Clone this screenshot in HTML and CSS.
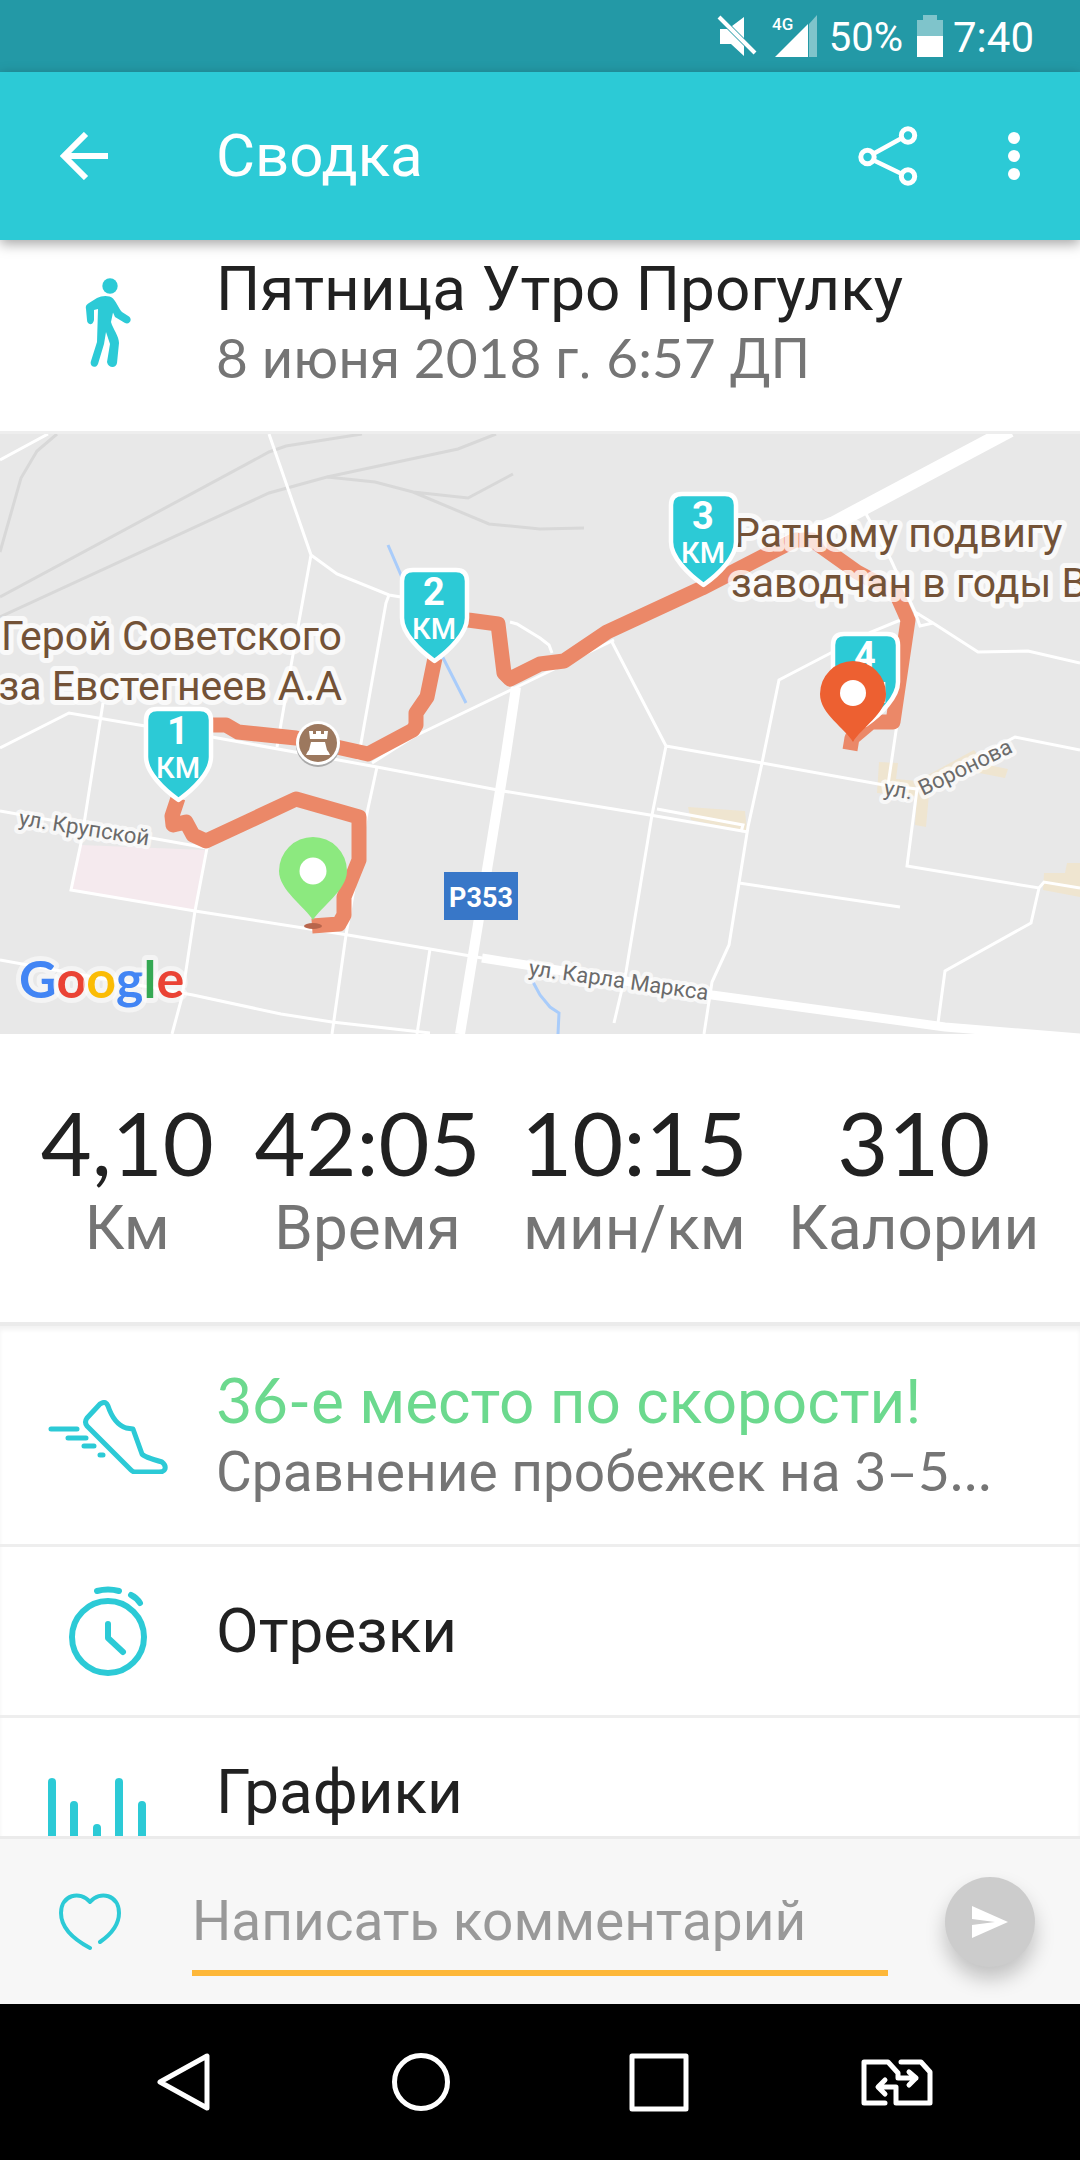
FILE: index.html
```html
<!DOCTYPE html>
<html lang="ru">
<head>
<meta charset="utf-8">
<meta name="viewport" content="width=device-width, initial-scale=1">
<title>Сводка</title>
<link rel="stylesheet" href="styles.css">
</head>
<body>
<div class="app">
  <div class="status">
    <svg class="status-icon" width="42" height="42" viewBox="0 0 42 42" aria-hidden="true">
      <path d="M4 14v15h11l13 12V31L11 14zM16 11l12-9v21z" fill="#fff"/>
      <path d="M3 2l36 36" stroke="#fff" stroke-width="4"/>
    </svg>
    <svg class="status-signal" width="46" height="42" viewBox="0 0 46 42" aria-hidden="true">
      <path d="M37 9L45 0V42H37z" fill="#7fc4cb"/>
      <path d="M3 42L36 9V42z" fill="#fff"/>
      <text x="0" y="15" class="status-net">4G</text>
    </svg>
    <span class="status-percent">50%</span>
    <svg class="status-battery" width="26" height="42" viewBox="0 0 26 42" aria-hidden="true">
      <path d="M6 0h14v5h6v16H0V5h6z" fill="#7fc4cb"/>
      <path d="M0 21h26v21H0z" fill="#fff"/>
    </svg>
    <span class="status-time">7:40</span>
  </div>

  <header class="appbar">
    <button class="icon-button back" type="button" aria-label="Назад">
      <svg width="48" height="48" viewBox="0 0 48 48" fill="none" stroke="#fff" stroke-width="6"><path d="M48 24H5M26 2L4 24l22 22"/></svg>
    </button>
    <h1 class="appbar-title">Сводка</h1>
    <button class="icon-button share" type="button" aria-label="Поделиться">
      <svg width="60" height="60" viewBox="0 0 60 60" fill="none" stroke="#fff" stroke-width="5">
        <circle cx="9.500" cy="31" r="6.700"/><circle cx="50" cy="9.500" r="6.700"/><circle cx="50" cy="50.500" r="6.700"/>
        <path d="M15 28L44 12M15 34L44 48" stroke-width="4.500"/>
      </svg>
    </button>
    <button class="icon-button more" type="button" aria-label="Ещё">
      <svg width="12" height="48" viewBox="0 0 12 48" fill="#fff"><circle cx="6" cy="6" r="6"/><circle cx="6" cy="24" r="6"/><circle cx="6" cy="42" r="6"/></svg>
    </button>
  </header>

  <main class="content">
    <section class="row summary">
      <span class="row-icon">
        <svg width="46" height="90" viewBox="0 0 46 90" aria-hidden="true" fill="#2ccad6">
          <circle cx="25" cy="8" r="7.700"/>
          <path d="M12 20C17 17.500 24 17 28 20.500C32 25 34 31 37 34L44 38.500C48 42 44 47 40 45L30 39L28 34.500L26 44C28 51 34 58 34 65L32 85C31 91 23 90 22 84L25 66L21 54L19 66L13 86C11 91 4 89 6 83L12 64L13 31L9 32L9 42C8 48 2 47 2 42L1 31Q0 27 4 25z"/>
        </svg>
      </span>
      <div class="row-text">
        <h2 class="row-title">Пятница Утро Прогулку</h2>
        <p class="row-sub"><span class="num">8</span> июня <span class="num">2018</span> г. <span class="num">6:57</span> ДП</p>
      </div>
    </section>

    <svg class="map" viewBox="0 0 1080 600" role="img" aria-label="Карта маршрута">
      <defs>
        <g id="km-shield">
          <path d="M13 2H56Q67 2 67 13V50C67 65 50 82 34.500 93C19 82 2 65 2 50V13Q2 2 13 2z" fill="#2ccad6" stroke="#fff" stroke-width="4.500" stroke-linejoin="round"/>
        </g>
      </defs>
      <rect width="1080" height="600" fill="#e8e8e8"/>
      <path d="M81 411L205 416L195 477L71 456z" fill="#f5eaee"/>
      <g fill="#efe5d0">
        <path d="M688 373L745 377L747 397L691 386z"/>
        <path d="M879 328L898 329L896 345L917 347L974 316L980 324L929 360L926 393L915 391L917 362L877 359z"/>
        <path d="M974 338L988 331L1008 335L1005 344z"/>
        <path d="M1044 439H1065L1067 429H1080V463L1043 456z"/>
      </g>
      <g fill="none" stroke="#d8d8d8" stroke-width="3">
        <path d="M0 163L269 18L286 12L362 0"/>
        <path d="M0 183L269 59L327 43L458 15L496 0"/>
        <path d="M327 43L375 48L413 58L468 64L513 40M413 58L489 90L540 95L584 94"/>
        <path d="M57 0L37 17L21 44L0 118"/>
      </g>
      <g fill="none" stroke="#a9ccfa" stroke-width="3">
        <path d="M388 111L401 141L466 269M533 548L540 561L550 573L559 579L558 600"/>
      </g>
      <g fill="none" stroke="#fff" stroke-width="3">
        <path d="M0 26L48 0M269 0L311 121L337 140L389 161L401 163M311 121L292 226L277 313"/>
        <path d="M389 161L386 169L374 236L358 326M377 333L367 379L346 501L332 600"/>
        <path d="M0 314L69 279L145 292M103 269L81 409L71 456L195 477L348 501L430 515L482 524"/>
        <path d="M430 515L417 600M207 414L195 477L182 563L172 600M0 377L207 414"/>
        <path d="M0 526L138 551L193 561L281 580L332 588L430 599"/>
        <path d="M212 303L300 319L377 333L503 357L540 363L650 381L748 398"/>
        <path d="M372 329L413 303L517 253L614 206M510 188L517 190L540 204L549 211L552 219"/>
        <path d="M612 208L666 312L652 381L626 538L614 589M666 312L762 329L884 351L917 355"/>
        <path d="M920 180L898 187L871 198L779 246L762 329L748 393L739 449L729 511L712 548L704 600"/>
        <path d="M739 449L900 473M657 375L743 391L741 398"/>
        <path d="M865 78L891 126L915 178L933 189L978 218L1028 217L1080 229M915 178L920 192L933 189"/>
        <path d="M900 270L888 351M1080 316L1015 303L917 355L907 432L1039 454L1044 448L1080 454M1039 454L1031 489L945 537L938 589"/>
      </g>
      <g fill="none" stroke="#fff">
        <path d="M516 253L506 320L460 600" stroke-width="10"/>
        <path d="M482 524L712 561L945 593L1080 604" stroke-width="9"/>
        <path d="M1010 -4L833 90L780 112" stroke-width="15"/>
      </g>
      <g fill="none" stroke="#eb8868" stroke-width="15" stroke-linejoin="round">
        <path d="M312 492L339 490L344 481V463L359 426V383L296 365L206 407L193 401L186 388L173 391L172 382L178 364"/>
        <path d="M178 291H226L238 298L296 304L368 320L413 296L416 291V279L427 263L435 224"/>
        <path d="M435 180L468 186L498 190L504 239L510 245L540 230L564 227L607 198L702 154L795 106H812L857 138L896 159L908 186L893 288H871L852 304L850 316"/>
      </g>
      <ellipse cx="313" cy="492" rx="9" ry="3" fill="#b8654c"/>
      <g>
        <circle cx="318" cy="311" r="22" fill="#a9a9a9"/>
        <circle cx="318" cy="309" r="22" fill="#fff"/>
        <circle cx="318" cy="309" r="19" fill="#9c785e"/>
        <path d="M309 297h4v3h3v-3h5v3h3v-3h4l-1 8h-17zM311 308h14l2 8q2 2 3 5h-24q1-3 3-5z" fill="#fff"/>
      </g>
      <rect x="444" y="438" width="74" height="48" fill="#3877c8"/>
      <text class="map-route" x="481" y="473" text-anchor="middle">Р353</text>

      <g class="map-place">
        <text x="342" y="216" text-anchor="end">Герой Советского</text>
        <text x="342" y="266" text-anchor="end">за Евстегнеев А.А</text>
        <text x="734" y="113">Ратному подвигу</text>
        <text x="731" y="163">заводчан в годы В</text>
      </g>
      <g class="map-street">
        <text transform="translate(18 391) rotate(9)">ул. Крупской</text>
        <text transform="translate(528 541) rotate(8)">ул. Карла Маркса</text>
        <text transform="translate(883 361) rotate(9)">ул.</text>
        <text transform="translate(923 362) rotate(-26)">Воронова</text>
      </g>

      <g class="map-km" text-anchor="middle">
        <g transform="translate(144 273)"><use href="#km-shield"/><text class="map-km-value" x="34" y="37">1</text><text x="34" y="71">КМ</text></g>
        <g transform="translate(400 134)"><use href="#km-shield"/><text class="map-km-value" x="34" y="37">2</text><text x="34" y="71">КМ</text></g>
        <g transform="translate(669 58)"><use href="#km-shield"/><text class="map-km-value" x="34" y="37">3</text><text x="34" y="71">КМ</text></g>
        <g transform="translate(831 198)"><use href="#km-shield"/><text class="map-km-value" x="34" y="37">4</text><text x="34" y="71">КМ</text></g>
      </g>
      <path d="M313 486C305 473 279 456 279 437A34 34 0 0 1 347 437C347 456 321 473 313 486z" fill="#8ce97f"/>
      <circle cx="313" cy="437" r="13.500" fill="#fff"/>
      <path d="M853 308C845 294 820 280 820 260A33 33 0 0 1 886 260C886 280 861 294 853 308z" fill="#ed6031"/>
      <circle cx="853" cy="259" r="13" fill="#fff"/>

      <text class="map-logo" x="19" y="564"><tspan fill="#4285f4">G</tspan><tspan fill="#ea4335">o</tspan><tspan fill="#fbbc05">o</tspan><tspan fill="#4285f4">g</tspan><tspan fill="#34a853">l</tspan><tspan fill="#ea4335">e</tspan></text>
    </svg>

    <dl class="stats">
      <div class="stat"><dt>Км</dt><dd>4,10</dd></div>
      <div class="stat"><dt>Время</dt><dd>42:05</dd></div>
      <div class="stat"><dt>мин/км</dt><dd>10:15</dd></div>
      <div class="stat"><dt>Калории</dt><dd>310</dd></div>
    </dl>

    <nav class="list">
      <a class="row rank" href="#rank">
        <span class="row-icon">
          <svg width="120" height="74" viewBox="0 0 120 74" aria-hidden="true" fill="none" stroke="#2ccad6" stroke-width="5" stroke-linecap="round" stroke-linejoin="round">
            <path d="M54 3Q58 1 60 6Q66 24 78 28L85 29L94 54Q96 57 114 62Q118 65 117 69Q116 72 111 72H87Q85 72 83 70L39 26Q36 22 39 18L52 4z"/>
            <path d="M3 29H29M20 38H38M36 46H46M52 55H55"/>
          </svg>
        </span>
        <span class="row-text">
          <span class="row-title good"><span class="num">36-</span>е место по скорости!</span>
          <span class="row-sub">Сравнение пробежек на <span class="num">3–5…</span></span>
        </span>
      </a>
      <a class="row single" href="#splits">
        <span class="row-icon">
          <svg width="78" height="90" viewBox="0 0 78 90" aria-hidden="true" fill="none" stroke="#2ccad6" stroke-width="6" stroke-linecap="round" stroke-linejoin="round">
            <circle cx="39" cy="51" r="36"/>
            <path d="M39 38V52L54 66M28 5Q39 2 50 5M62 9Q68 12 71 17"/>
          </svg>
        </span>
        <span class="row-text"><span class="row-title">Отрезки</span></span>
      </a>
      <a class="row charts" href="#charts">
        <span class="row-icon">
          <svg width="120" height="90" viewBox="0 0 120 90" aria-hidden="true" fill="none" stroke="#2ccad6" stroke-width="8" stroke-linecap="round">
            <path d="M4 4V86M26 27V86M49 50V86M71 4V86M94 27V86"/>
          </svg>
        </span>
        <span class="row-text"><span class="row-title">Графики</span></span>
      </a>
    </nav>
  </main>

  <form class="comment">
    <button class="icon-button like" type="button" aria-label="Нравится">
      <svg width="62" height="58" viewBox="0 0 62 58" fill="none" stroke="#2ccad6" stroke-width="4" stroke-linecap="round" stroke-linejoin="round">
        <path d="M31 55C14 46 2 34 2 20C2 2 21 -3 31 9C41 -3 60 2 60 20C60 32 51 42 41 49"/>
      </svg>
    </button>
    <input class="comment-input" type="text" placeholder="Написать комментарий" aria-label="Написать комментарий">
    <button class="send" type="submit" aria-label="Отправить">
      <svg width="38" height="34" viewBox="0 0 38 34" fill="#fff"><path d="M1 1L37 17L1 33V20L24 17L1 14z"/></svg>
    </button>
  </form>

  <nav class="navbar">
    <button type="button" aria-label="Назад"><svg width="54" height="60" viewBox="0 0 54 60" fill="none" stroke="#fff" stroke-width="5" stroke-linejoin="round"><path d="M51 4V56L4 30z"/></svg></button>
    <button type="button" aria-label="Домой"><svg width="60" height="60" viewBox="0 0 60 60" fill="none" stroke="#fff" stroke-width="5"><circle cx="30" cy="30" r="26.500"/></svg></button>
    <button type="button" aria-label="Обзор"><svg width="60" height="60" viewBox="0 0 60 60" fill="none" stroke="#fff" stroke-width="5" stroke-linejoin="round"><rect x="3" y="4" width="54" height="53"/></svg></button>
    <button type="button" aria-label="Сменить SIM"><svg width="72" height="48" viewBox="0 0 72 48" fill="none" stroke="#fff" stroke-width="5" stroke-linecap="round" stroke-linejoin="round"><path d="M24 45H3V4H27L37 15V20H55M48 14L55 20L48 27M40 4H60L69 14V45H35V29H18M24 22L17 29L24 36"/></svg></button>
  </nav>
</div>
</body>
</html>
```
FILE: styles.css
```css
* { box-sizing: border-box; }

body {
  margin: 0;
  font-family: Roboto, "Noto Sans", sans-serif;
  color: #212121;
  background: #fff;
}

h1, h2, p, dl, dd { margin: 0; font-weight: 400; }

button {
  padding: 0;
  border: 0;
  background: none;
  font: inherit;
}

svg { display: block; }

.app {
  display: flex;
  flex-direction: column;
  height: 100vh;
}

.num { font-family: Lato, "Open Sans", sans-serif; line-height: 1; }

/* System status bar */
.status {
  display: flex;
  flex: none;
  align-items: center;
  justify-content: flex-end;
  height: 72px;
  padding-right: 46px;
  background: #2399a6;
  color: #fff;
  line-height: 48px;
}
.status-icon { margin-right: 14px; }
.status-signal { margin-right: 11px; overflow: visible; }
.status-net { font-size: 17px; font-weight: 500; fill: #fff; }
.status-percent { font-size: 40px; margin-right: 14px; padding-top: 3px; }
.status-battery { margin-right: 10px; }
.status-time { font-size: 42px; padding-top: 3px; }

/* App bar */
.appbar {
  position: relative;
  z-index: 1;
  display: flex;
  flex: none;
  align-items: center;
  height: 168px;
  padding: 0 60px;
  background: #2ccad6;
  color: #fff;
  box-shadow: 0 4px 12px rgba(0, 0, 0, 0.35);
}
.back { margin-right: 108px; }
.appbar-title { flex: 1; font-size: 60px; line-height: 72px; }
.share { margin-right: 90px; }

/* Scrolling content */
.content { flex: 1; min-height: 0; overflow: hidden; }

.row {
  display: flex;
  color: inherit;
  text-decoration: none;
  border-bottom: 3px solid #eee;
}
.row-icon {
  display: flex;
  flex: none;
  justify-content: center;
  width: 216px;
}
.row-text { flex: 1; min-width: 0; }
.row-title, .row-sub {
  display: block;
  overflow: hidden;
  text-overflow: ellipsis;
  white-space: nowrap;
}
.row-title { font-size: 62px; line-height: 72px; }
.row-sub { font-size: 55px; line-height: 68px; color: #757575; }
.good { color: #6cd98e; }

.summary { padding: 13px 0 38px; }
.summary .row-icon { padding-top: 25px; }
.rank { padding: 40px 0 38px; }
.rank .row-icon { padding-top: 34px; }
.single { align-items: center; padding: 48px 0; }
.single .row-icon { height: 72px; align-items: center; }
.charts { padding: 38px 0; }
.charts .row-icon { padding-top: 22px; }

/* Map */
.map { width: 100%; height: auto; }
.map-place { font-size: 41px; fill: #735237; stroke: rgba(255, 255, 255, 0.75); stroke-width: 10px; stroke-linejoin: round; paint-order: stroke; }
.map-street { font-size: 22px; fill: #6b6b6b; stroke: rgba(255, 255, 255, 0.7); stroke-width: 8px; stroke-linejoin: round; paint-order: stroke; }
.map-route { font-size: 27px; font-weight: 700; fill: #fff; }
.map-km { font-size: 29px; font-weight: 500; fill: #fff; }
.map-km-value { font-size: 38px; font-weight: 700; }
.map-logo { font-family: Lato, sans-serif; font-size: 52px; font-weight: 700; stroke: rgba(255, 255, 255, 0.5); stroke-width: 10px; stroke-linejoin: round; paint-order: stroke; }

/* Totals */
.stats {
  display: flex;
  justify-content: space-evenly;
  padding: 58px 0;
}
.stat { display: flex; flex-direction: column-reverse; align-items: center; }
.stat dt { font-size: 62px; line-height: 72px; color: #757575; }
.stat dd { font-family: Lato, "Open Sans", sans-serif; font-size: 88px; line-height: 100px; }

.list {
  border-top: 4px solid #ebebeb;
  box-shadow: inset 0 4px 4px rgba(0, 0, 0, 0.05);
}

/* Comment bar */
.comment {
  display: flex;
  flex: none;
  align-items: center;
  height: 168px;
  padding: 0 45px 0 59px;
  border-top: 3px solid #ebebeb;
  background: #f7f7f7;
}
.like { margin-right: 71px; }
.comment-input {
  flex: 1;
  min-width: 0;
  height: 108px;
  margin: 0 57px 0 0;
  padding: 4px 0 0;
  border: 0;
  border-bottom: 6px solid #fdb739;
  border-radius: 0;
  outline: 0;
  background: none;
  font: inherit;
  font-size: 55px;
  color: #212121;
}
.comment-input::placeholder { color: #999; opacity: 1; }
.send {
  display: flex;
  align-items: center;
  justify-content: center;
  width: 90px;
  height: 90px;
  border-radius: 50%;
  background: #ccc;
  box-shadow: 0 12px 20px rgba(0, 0, 0, 0.22);
}

/* System navigation */
.navbar {
  display: grid;
  flex: none;
  grid-template-columns: repeat(4, 1fr);
  height: 156px;
  padding: 0 64px;
  background: #000;
}
.navbar button { display: flex; align-items: center; justify-content: center; }
```
